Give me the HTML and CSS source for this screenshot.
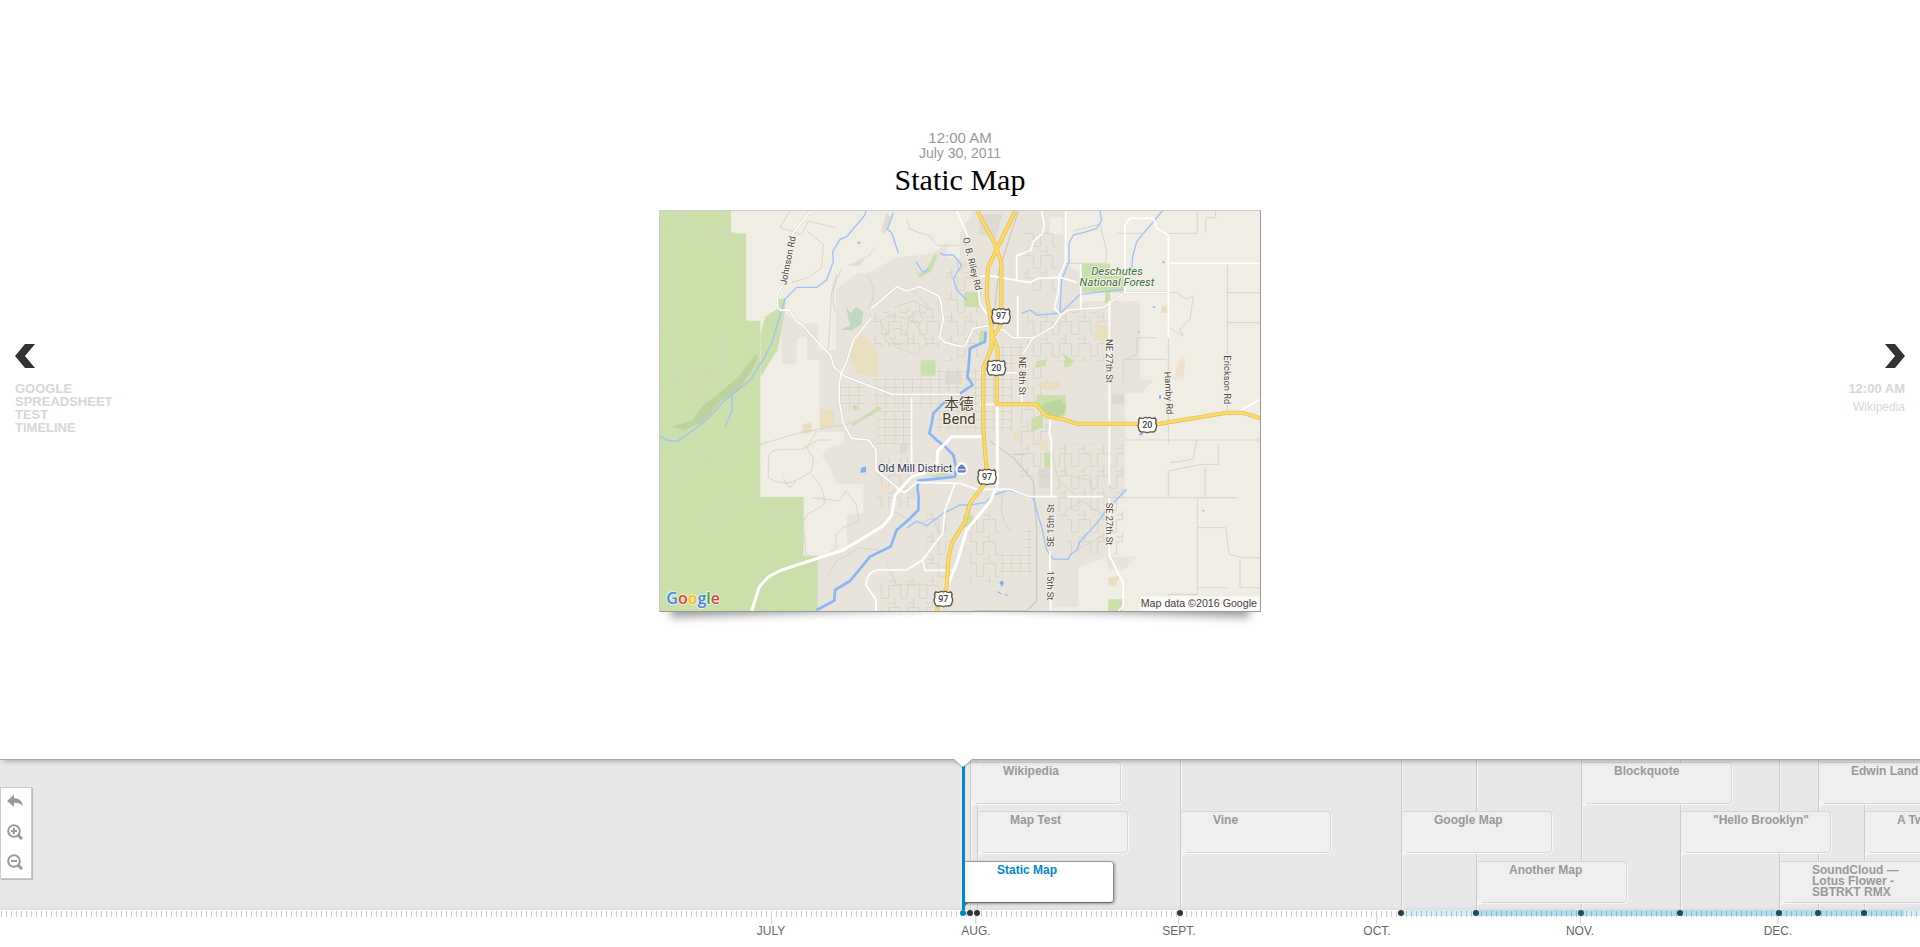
FILE: index.html
```html
<!DOCTYPE html>
<html lang="en">
<head>
<meta charset="utf-8">
<title>Static Map</title>
<link rel="stylesheet" href="styles.css">
</head>
<body>
<div class="page">
  <main class="stage">
    <button class="step step-prev" type="button">
      <svg class="step-icon" viewBox="0 0 20 24" aria-hidden="true"><path d="M10 0h10L10 12l10 12H10L0 12z"/></svg>
      <span class="step-date">Google<br>Spreadsheet<br>Test<br>Timeline</span>
    </button>
    <article class="slide">
      <div class="slide-time">12:00 AM</div>
      <div class="slide-date">July 30, 2011</div>
      <h1 class="slide-title">Static Map</h1>
      <figure class="map-frame">
        <svg class="map" viewBox="0 0 1800 1200" role="img" aria-label="Map of Bend">
          <defs>
            <pattern id="blocks" width="27" height="24" patternUnits="userSpaceOnUse"><path d="M0 1H27M1 0V24" class="lane"/></pattern>
            <pattern id="blocks-wide" width="57" height="66" patternUnits="userSpaceOnUse"><path d="M0 2H38V40H57M2 0V40M20 40V66M0 54H20" class="lane"/></pattern>
            <g id="shield"><path d="M-22-21q5 4 11 1q5-4 11 0q6-4 11 0q6 3 11-1q7 7 3 14q5 10 1 19q-2 10-10 10q-8-1-16 2q-8-3-16-2q-8 0-10-10q-4-9 1-19q-4-7 3-14z" fill="#fff" stroke="#5c5748" stroke-width="4"/></g>
          </defs>
          <rect width="1800" height="1200" fill="#f0ede5"/>

          <!-- built-up area -->
          <g fill="#e8e4dc">
            <path d="M365 300L415 337H475V417H528V235L590 187H620L710 140L820 127L900 66L940 0H1215V160L1260 180V270H1440V507H1395V687V847L1350 877V1037L1255 1067V1187H1180V1200H473V1037L560 1010V912L610 905V819H530L500 750L485 735L515 705L553 697V662H478V447H440V380H410V460H365z"/>
            <path d="M1335 1037h95l-40 40h-40zM1395 507h85l-35 40h-50z"/>
          </g>
          <path d="M860 60h40v80h-40zM1170 20h40v50h-40z" fill="#f0ede5"/>
          <path d="M958 10l70 0-20 70-50-10zM855 480h50v40h-50zM720 700h22v26h-22zM1135 770h35v60h-35zM1355 550h38v30h-38z" fill="#deDAD3"/>
          <path d="M680 5l15 15-20 50-12-10zM655 100l-30 40-4-4zM560 165l60-30-20 30z" fill="#e2ddd3"/>

          <!-- street blocks -->
          <g fill="url(#blocks)">
            <path d="M640 500h180v90h-180zM820 470h240v190h-240zM535 520h80v80h-80zM650 600h110v100h-110zM1010 400h80v120h-80z"/>
            <path d="M1090 950h30v120h-30zM1020 1030h100v60h-100z"/>
          </g>
          <g fill="url(#blocks-wide)">
            <path d="M640 310l200-40v140H640zM860 150h100v300h-100zM1090 60h100v180h-100zM1100 300h240v150h-240zM1190 700h200v330h-170v-110h-30zM800 900h60v230h-60zM660 1100h200v100h-200zM650 740h120v150h-120zM1080 470h90v330h-90zM930 900h90v220h-90z"/>
          </g>

          <!-- forest and parks -->
          <g fill="#cadfaa">
            <path d="M0 0H213V67H258V329H301V858H431V1034H473V1200H0z"/>
            <path d="M355 265l22-3-2 35-10 60-13 60-50 80v-130l14-50 40-25z"/>
            <path d="M765 168l12 20 20-10 28-50 8 4-20 50-35 18zM912 243h50v45h-50zM960 360l18-4-4 45-18-4zM782 448h44v46h-44zM1130 552h88v60l-40 12-48-36zM1115 620l36-10-4 40-34 12zM1152 725h20v45h-20zM1265 158h86v26h40v60h-126zM1335 240h15v36h-15zM1205 425l38 24-14 15zM1130 450l30-4-4 20-30 4zM910 913h30v36h-30zM1345 1165h42v35h-42zM578 585q10-8 16 5q-6 14-16 5zM575 640l80-54 12 6-90 54zM800 795l50-10 30 6-50 8zM1212 447h20v20h-20z"/>
          </g>
          <path d="M1160 575l40-10 18 20-8 26-34 8-36-24z" fill="#bcd6a0"/>
          <path d="M285 430l10 8-20 40-40 60-50 30-50 60-60 30-40-10 60-20 40-50 40-30 60-50z" fill="#bdd29d"/>
          <g fill="#eadfbf">
            <path d="M582 378l22-8 30 22 20 38-2 68-60-8-26-56zM480 595h42v54h-42zM428 640l26-6v33h-28zM1305 343h42v45h-42zM1130 520l70-10v20l-40 8zM1060 665l20-8v26h-20zM1130 685l32 4-3 30-20-8zM1505 286h18v20h-18zM1345 1100l35-6-14 34-20-6z"/>
          </g>
          <path d="M1560 440q20-10 16 20l-6 44-30 4zM660 825h30v14h-30z" fill="#f2e1cc"/>
          <path d="M558 286l12 20 20-18 20 16-6 36-28 18-36-2 30-12z" fill="#bfd9c0"/>

          <!-- trails and country lanes -->
          <g class="lane">
            <path d="M65 0q0 60-60 50M90 72L190 68Q210 60 210 128M230 67L175 60M10 360q30 40 25 140M190 360q5 90-10 130l-90 60M0 800Q150 720 301 700L420 665 560 640 640 610M301 858l50 60 50-30M0 520q90-60 150-40M60 640l60-130M130 930l170-100"/>
            <path d="M390 0l-30 50 65 20 20-40 80 20M440 60l50 40-5 70-40 30-50 15M525 300q-20-60 20-125M530 190l-15 55-10 170M620 190q40 60 5 100M740 25l10 30 60 20 20 28h70"/>
            <path d="M325 745q0-30 40-30l60 0 50-28 40 0M325 745v55q50 30 90 5l40-25 5-40-20-30 30-50M370 800q20 50 38 10M455 790q40 40 38 90l-50 30q-20 20-10 60l5 60q40 30 90-20l0-40 20-20 50-20-10-50-30-40-20 30-80-10M500 1100l30-50 70-40 70 10"/>
            <path d="M700 290l60-20 60 30-60-60M660 330l30-20 70 20 40 60-30 40-60-20zM690 360q30-20 50 10t-30 30-30-40M755 310q20-20 30 5t-20 20-10-25"/>
            <path d="M1215 157h120l-10 60M1240 60l80-20 20 80-5 70M1370 67h80M1612 0v67h-90M1667 0v20h-30v47M1702 160V600M1525 580v60M1395 687H1800M1525 160V700M1530 245h20l30 20 20-10-10 70-30 30 10 20-50-30M1702 335h98M1700 245h100M1350 860h380L1612 860V1150H1525V1200M1525 860V780l100-20h50V700M1610 685l-10 60-70 10M1635 770v90M1612 950h85l10 80 40 10h55M1740 1040v90h60M1612 1130h90M1390 510v-60l40-20v-50l60 0M1390 445h130"/>
            <path d="M1175 720l20 90 60 50M1215 700v90l80 20v40M1215 900l50-30 80 50-10 50-90 50M1030 840q-20 70 20 120M700 900l70 40 50-20 20 60M680 1060l30 60 90 0"/>
          </g>
          <path d="M1075 0q-40 120-60 190l-20 200M990 690l70 50 60 70 10 150v210l-30 30h-160M1060 730h35" fill="none" stroke="#cfcbc3" stroke-width="4"/>

          <!-- water -->
          <g class="stream">
            <path d="M617 0L615 12 560 77 540 85 518 122 520 152 500 207 470 229H410L375 265 350 347 335 397 315 437 290 477 270 507 215 552 190 572 145 622 100 657 50 692 20 687 0 675M215 552L217 597 195 647"/>
            <path d="M700 5l-18 50 13 10 20 60M768 153l20 30 20-8M840 126l10 6 30 0 25 30-25 40 10 35 30 30"/>
            <path d="M1320 0L1325 27 1310 52 1280 62 1240 72 1227 97V152L1205 207 1200 307M1507 0L1480 32 1430 92 1418 137 1415 177M1085 307L1110 297 1130 312 1200 307 1230 280 1260 250 1390 235"/>
            <path d="M740 952L770 930 800 944 850 907 900 882 930 882 975 875 1000 852 1045 837 1095 852 1120 862 1135 917 1145 947 1153 987 1160 1017 1180 1044 1225 1045 1230 1032 1250 1017 1260 992 1310 937 1340 897 1400 835"/>
          </g>
          <g class="river">
            <path d="M977 362L975 392 930 412 925 477 922 497 938 522 900 547M900 572H855L820 607 815 637 808 667 830 687 855 707 880 732 888 767 885 797 840 802 775 809 772 832 776 857 775 897 745 927 710 957 692 1007 630 1037 570 1110 525 1137 523 1169 470 1197"/>
          </g>
          <path d="M600 785l4-15 14-4v18zM590 95l12-4-4 8zM1505 152l8-2v8zM1476 288l8-4v8zM1432 362l6-2v6zM1440 665h10l-4 8h-8zM1018 1115l8-7 6 8-6 12zM1008 1140l12 4 6 8zM1030 1148l15 4v4zM1497 553h6v10h-6zM1625 898h8v6z" fill="#7fb0fb"/>

          <!-- secondary roads -->
          <g id="secondary">
            <path class="road-case" d="M452 0L397 70V90M366 225l-14 20v45l12 8 20-2 15 16 8 18 20 12 40 45 45 46 10 35 30 27L695 550H900M633 322L605 357 580 387 560 452 545 485 538 512V572L550 637 575 682 625 687 648 717V777L720 837M633 294L711 227 740 240 780 227 835 254 843 272 850 327 838 377 855 394 900 406 915 405 940 352 980 345 1030 357 1058 380H1120M1090 427L1120 380 1180 347 1203 312 1225 297 1330 289 1395 245H1525"/>
            <path class="road" d="M452 0L397 70V90M366 225l-14 20v45l12 8 20-2 15 16 8 18 20 12 40 45 45 46 10 35 30 27L695 550H900M633 322L605 357 580 387 560 452 545 485 538 512V572L550 637 575 682 625 687 648 717V777L720 837M633 294L711 227 740 240 780 227 835 254 843 272 850 327 838 377 855 394 900 406 915 405 940 352 980 345 1030 357 1058 380H1120M1090 427L1120 380 1180 347 1203 312 1225 297 1330 289 1395 245H1525"/>
            <path class="road" d="M1395 245V42L1410 22H1480L1490 52 1525 72V380M1530 157H1800M1145 0L1153 42 1147 67 1120 92 1113 117 1070 134V212M1217 0V152L1197 197 1195 242 1183 292 1203 312M960 197L990 194 1110 215 1135 202 1200 199 1250 214M1262 160V297M1073 255V380M890 0l40 90M955 230l5 50 22 30M1348 270V822M1348 860V1033L1390 1117V1185L1375 1200"/>
            <path class="road" d="M710 837L735 844 770 814 900 817 950 835H1050L1110 857H1190M1220 857H1330M885 817L855 897 848 967 788 1047 740 1077H650q-32 10-32 45L648 1167V1200M788 1047L795 1079 875 1077M755 560V790M1172 625L1168 665 1174 690V860M1170 1020V1080M1172 1170V1200M1738 600L1800 565M960 580H1010M1085 520V580M960 485H1080"/>
          </g>
          <path d="M275 1200L298 1127 325 1097 365 1077 550 1017 670 944 695 912 705 852 755 797 790 787 832 757V722L875 677H965" class="highway-white"/>
          <path d="M1012 577V822L990 872 920 957 890 1057 860 1130" class="highway-white"/>

          <!-- main highways -->
          <g>
            <path class="trunk-case" d="M952 0L1003 95 1024 155V275L1020 345 998 378 1012 410 1014 450M1066 0L1010 115 984 170 980 250 995 350V410L970 470V660L982 800 971 822 930 877 915 932 875 997 866 1040 860 1127 830 1200M1010 480V580H1127L1160 615 1210 625 1250 638H1500L1700 605H1745L1800 621"/>
            <path class="trunk" d="M952 0L1003 95 1024 155V275L1020 345 998 378 1012 410 1014 450M1066 0L1010 115 984 170 980 250 995 350V410L970 470V660L982 800 971 822 930 877 915 932 875 997 866 1040 860 1127 830 1200M1010 480V580H1127L1160 615 1210 625 1250 638H1500L1700 605H1745L1800 621"/>
          </g>

          <!-- route shields -->
          <g class="shield-text">
            <use href="#shield" x="1023" y="315"/><text x="1023" y="325">97</text>
            <use href="#shield" x="1009" y="470"/><text x="1009" y="480">20</text>
            <use href="#shield" x="1462" y="641"/><text x="1462" y="651">20</text>
            <use href="#shield" x="981" y="797"/><text x="981" y="807">97</text>
            <use href="#shield" x="850" y="1163"/><text x="850" y="1173">97</text>
          </g>

          <!-- labels -->
          <g class="street">
            <text transform="translate(379 223) rotate(-79)">Johnson Rd</text>
            <text transform="translate(908 82) rotate(76)">O. B. Riley Rd</text>
            <text transform="translate(1078 437) rotate(90)">NE 8th St</text>
            <text transform="translate(1339 384) rotate(90)">NE 27th St</text>
            <text transform="translate(1513 482) rotate(87)">Hamby Rd</text>
            <text transform="translate(1691 433) rotate(90)">Erickson Rd</text>
            <text transform="translate(1182 1008) rotate(-90)">SE 15th St</text>
            <text transform="translate(1162 1079) rotate(90)">15th St</text>
            <text transform="translate(1339 875) rotate(90)">SE 27th St</text>
          </g>
          <g class="forest"><text x="1371" y="193">Deschutes</text><text x="1371" y="226">National Forest</text></g>
          <g class="city"><text x="897" y="593">本德</text><text x="897" y="640">Bend</text></g>
          <text x="654" y="782" class="poi">Old Mill District</text>
          <circle cx="905" cy="773" r="19" fill="#fff"/>
          <path d="M895 770h20v13h-20zM899 770v-4q6-8 12 0v4" fill="#7a9be0" stroke="#4d68ab" stroke-width="3"/>
          <path d="M895 776h20" stroke="#fff" stroke-width="2"/>
          <text x="19" y="1180" class="logo"><tspan fill="#4285f4">G</tspan><tspan fill="#ea4335">o</tspan><tspan fill="#fbbc05">o</tspan><tspan fill="#4285f4">g</tspan><tspan fill="#34a853">l</tspan><tspan fill="#ea4335">e</tspan></text>
          <rect x="1440" y="1156" width="360" height="44" fill="#fff" fill-opacity=".7"/>
          <text x="1791" y="1189" class="credit">Map data ©2016 Google</text>
        </svg>
      </figure>
    </article>
    <button class="step step-next" type="button">
      <svg class="step-icon" viewBox="0 0 20 24" aria-hidden="true"><path d="M10 0H0l10 12L0 24h10l10-12z"/></svg>
      <span class="step-date">12:00 AM</span>
      <span class="step-title">Wikipedia</span>
    </button>
  </main>

  <nav class="timeline" aria-label="Timeline">
    <div class="band"></div>
    <div class="scale"></div>
    <div class="canvas">
      <span class="stem" style="left:10px"></span><span class="stem" style="left:17px"></span>
      <span class="stem" style="left:220px"></span><span class="stem" style="left:441px"></span>
      <span class="stem" style="left:516px"></span><span class="stem" style="left:621px"></span>
      <span class="stem" style="left:720px"></span><span class="stem" style="left:819px"></span>
      <span class="stem" style="left:858px"></span><span class="stem" style="left:904px"></span>

      <button class="flag row-1" type="button" style="left:11px"><span class="flag-text">Wikipedia</span></button>
      <button class="flag row-2" type="button" style="left:18px"><span class="flag-text">Map Test</span></button>
      <button class="flag row-2" type="button" style="left:221px"><span class="flag-text">Vine</span></button>
      <button class="flag row-2" type="button" style="left:442px"><span class="flag-text">Google Map</span></button>
      <button class="flag row-3" type="button" style="left:517px"><span class="flag-text">Another Map</span></button>
      <button class="flag row-1" type="button" style="left:622px"><span class="flag-text">Blockquote</span></button>
      <button class="flag row-2" type="button" style="left:721px"><span class="flag-text">"Hello Brooklyn"</span></button>
      <button class="flag row-3" type="button" style="left:820px"><span class="flag-text">SoundCloud — Lotus Flower - SBTRKT RMX</span></button>
      <button class="flag row-1" type="button" style="left:859px"><span class="flag-text">Edwin Land on</span></button>
      <button class="flag row-2" type="button" style="left:905px"><span class="flag-text">A Tweet</span></button>
      <button class="flag row-3 is-active" type="button" style="left:4px"><span class="flag-text">Static Map</span></button>
      <span class="stem stem-active" style="left:2px"></span>

      <span class="month" style="left:-189px">JULY</span>
      <span class="month" style="left:16px">AUG.</span>
      <span class="month" style="left:219px">SEPT.</span>
      <span class="month" style="left:417px">OCT.</span>
      <span class="month" style="left:620px">NOV.</span>
      <span class="month" style="left:818px">DEC.</span>

      <span class="dot" style="left:10px"></span><span class="dot" style="left:17px"></span>
      <span class="dot" style="left:220px"></span><span class="dot" style="left:441px"></span>
      <span class="dot" style="left:516px"></span><span class="dot" style="left:621px"></span>
      <span class="dot" style="left:720px"></span><span class="dot" style="left:819px"></span>
      <span class="dot" style="left:858px"></span><span class="dot" style="left:904px"></span>
      <span class="dot dot-active" style="left:3px"></span>
      <span class="era" style="left:441px;width:600px"></span>
      <span class="era" style="left:516px;width:428px"></span>
    </div>
    <svg class="pointer" viewBox="0 0 18 8" aria-hidden="true"><path d="M0 0h18l-9 8z"/></svg>
    <div class="tools">
      <button class="tool" type="button" aria-label="Return to start"><svg viewBox="0 0 16 16"><path d="M0 7l7-6.500v3.700c5 0 8 2.300 9 8.300-2-3-5-4-9-3.800v4z"/></svg></button>
      <button class="tool" type="button" aria-label="Zoom in"><svg viewBox="0 0 16 16"><circle cx="7" cy="7" r="5.800" class="lens"/><path d="M11 11l4 4" class="handle"/><path d="M4 7h6M7 4v6" class="lens"/></svg></button>
      <button class="tool" type="button" aria-label="Zoom out"><svg viewBox="0 0 16 16"><circle cx="7" cy="7" r="5.800" class="lens"/><path d="M11 11l4 4" class="handle"/><path d="M4 7h6" class="lens"/></svg></button>
    </div>
  </nav>
</div>
</body>
</html>
```

FILE: styles.css
```css
* { box-sizing: border-box; }
body {
  margin: 0;
  background: #fff;
  font-family: "Liberation Sans", Arial, sans-serif;
}
button {
  margin: 0;
  padding: 0;
  border: 0;
  background: none;
  font: inherit;
  cursor: pointer;
}
.page {
  display: grid;
  grid-template-rows: 1fr auto;
  min-height: 100vh;
  overflow: hidden;
}

/* stage */
.stage {
  position: relative;
  z-index: 2;
  display: grid;
  grid-template-columns: 1fr auto 1fr;
  align-items: start;
  padding: 130px 15px 0;
  background: #fff;
  border-bottom: 1px solid #aaa;
  box-shadow: 3px 1px 5px rgba(0, 0, 0, 0.3);
}
.slide { text-align: center; }
.slide-time {
  color: #999;
  font-size: 15px;
  line-height: 15px;
}
.slide-date {
  color: #999;
  font-size: 14px;
  line-height: 16px;
}
.slide-title {
  margin: 0 0 12px;
  padding-top: 1px;
  color: #000;
  font: 400 30px/36px "Liberation Serif", serif;
}
.map-frame {
  position: relative;
  z-index: 0;
  width: 602px;
  max-width: 100%;
  margin: 0;
}
.map-frame::before,
.map-frame::after {
  content: "";
  position: absolute;
  z-index: -1;
  bottom: 15px;
  left: 10px;
  width: 50%;
  height: 20%;
  max-width: 300px;
  box-shadow: 0 15px 10px #999;
  transform: rotate(-2deg);
}
.map-frame::after {
  right: 10px;
  left: auto;
  transform: rotate(2deg);
}
.map {
  display: block;
  width: 100%;
  border: 1px solid;
  border-color: #ccc #999 #999 #ccc;
  background: #f0ede5;
}

/* map drawing */
.lane { fill: none; stroke: #dad5c8; stroke-width: 3; }
.stream { fill: none; stroke: #9dc3fb; stroke-width: 4; }
.river { fill: none; stroke: #8ab4f8; stroke-width: 8; stroke-linejoin: round; }
.road { fill: none; stroke: #fff; stroke-width: 5; stroke-linejoin: round; }
.road-case { fill: none; stroke: #d9d4c9; stroke-width: 8; stroke-linejoin: round; }
.highway-white { fill: none; stroke: #fff; stroke-width: 9; stroke-linejoin: round; }
.trunk-case { fill: none; stroke: #e3b95c; stroke-width: 12; stroke-linejoin: round; }
.trunk { fill: none; stroke: #fddb5f; stroke-width: 8; stroke-linejoin: round; }
.map text { paint-order: stroke; stroke: #f5f2ec; stroke-width: 6; stroke-linejoin: round; }
.street { fill: #4f4a3e; font: 28px Roboto, sans-serif; }
.forest { fill: #3d7340; font: italic 34px Roboto, sans-serif; text-anchor: middle; }
.city { fill: #463c28; font: 44px Roboto, "Noto Sans CJK SC", sans-serif; text-anchor: middle; }
.poi { fill: #303458; font: 33px Roboto, sans-serif; }
.logo { font: 600 48px "Open Sans", sans-serif; }
.map .logo { stroke: #e8f2d8; }
.shield-text { font: 500 27px Roboto, sans-serif; fill: #444; text-anchor: middle; }
.map .shield-text text, .map .credit { stroke: none; }
.credit { fill: #444; font: 32px "Liberation Sans", sans-serif; text-anchor: end; }

/* previous and next */
.step {
  display: grid;
  margin-top: 214px;
  color: #d8d8d8;
  font-size: 13px;
  line-height: 13px;
}
.step-prev { justify-self: start; text-align: left; }
.step-next { justify-self: end; justify-items: end; text-align: right; }
.step-icon {
  width: 20px;
  height: 24px;
  margin-bottom: 14px;
  fill: #333;
}
.step-date { font-weight: 700; text-transform: uppercase; }
.step-title {
  margin-top: 6px;
  font-size: 12px;
}

/* timeline */
.timeline {
  position: relative;
  padding-bottom: 30px;
}
.band {
  height: 150px;
  background: linear-gradient(#e8e8e8 0 146px, #dfdfdf);
}
.scale {
  height: 7px;
  background:
    repeating-linear-gradient(90deg, transparent 0 1px, #ccc 1px 2px, transparent 2px 5px) 0 1px no-repeat,
    #fff;
}
.canvas {
  position: absolute;
  top: 0;
  bottom: 0;
  left: 50%;
}
.stem {
  position: absolute;
  top: 0;
  width: 2px;
  height: 150px;
  border-left: 1px solid #ccc;
  border-right: 1px solid #f3f3f3;
}
.stem-active {
  width: 3px;
  border: 0;
  background: #0088cc;
}
.flag {
  position: absolute;
  display: flex;
  width: 150px;
  height: 42px;
  padding: 3px 12px 0 32px;
  border: 1px solid #d6d6d6;
  border-left: 0;
  border-radius: 2px 4px 4px 0;
  background: #efefef;
  box-shadow: 1px 1px 0 #f6f6f6;
  color: #999;
  text-align: left;
}
.flag::after {
  content: "";
  position: absolute;
  top: 100%;
  left: 0;
  width: 5px;
  height: 5px;
  background: #f6f6f6;
  clip-path: polygon(0 0, 100% 0, 0 100%);
}
.flag-text {
  font-size: 12px;
  font-weight: 700;
  line-height: 11px;
}
.row-1 { top: 2px; }
.row-2 { top: 51px; }
.row-3 { top: 101px; }
.is-active {
  padding-left: 33px;
  border-color: #999 #888 #666;
  background: linear-gradient(90deg, #eee, #fff 6px);
  box-shadow: 1px 1px 3px rgba(0, 0, 0, 0.35);
  color: #0088cc;
}
.is-active::after { background: #666; }
.dot {
  position: absolute;
  top: 150px;
  width: 6px;
  height: 6px;
  margin-left: -3px;
  border-radius: 50%;
  background: #333;
}
.dot-active { background: #0088cc; }
.era {
  position: absolute;
  top: 150px;
  height: 6px;
  background: rgba(0, 136, 204, 0.16);
}
.month {
  position: absolute;
  top: 156px;
  display: grid;
  justify-items: center;
  color: #666;
  font-size: 12px;
  line-height: 14px;
  transform: translateX(-50%);
}
.month::before {
  content: "";
  width: 1px;
  height: 8px;
  background: #ccc;
}
.pointer {
  position: absolute;
  z-index: 3;
  top: -1px;
  left: calc(50% - 6px);
  width: 18px;
  height: 8px;
  fill: #fff;
  filter: drop-shadow(0 1px 1px rgba(0, 0, 0, 0.3));
}
.tools {
  position: absolute;
  top: 27px;
  left: 0;
  display: grid;
  border: 1px solid #ccc;
  background: #fff;
  box-shadow: 1px 1px 0 #bbb;
}
.tool {
  display: grid;
  width: 30px;
  height: 30px;
  padding: 6px 0 0 6px;
}
.tool svg { width: 16px; height: 16px; fill: #999; }
.tool .lens { fill: none; stroke: #999; stroke-width: 2; }
.tool .handle { fill: none; stroke: #999; stroke-width: 3; }
```
